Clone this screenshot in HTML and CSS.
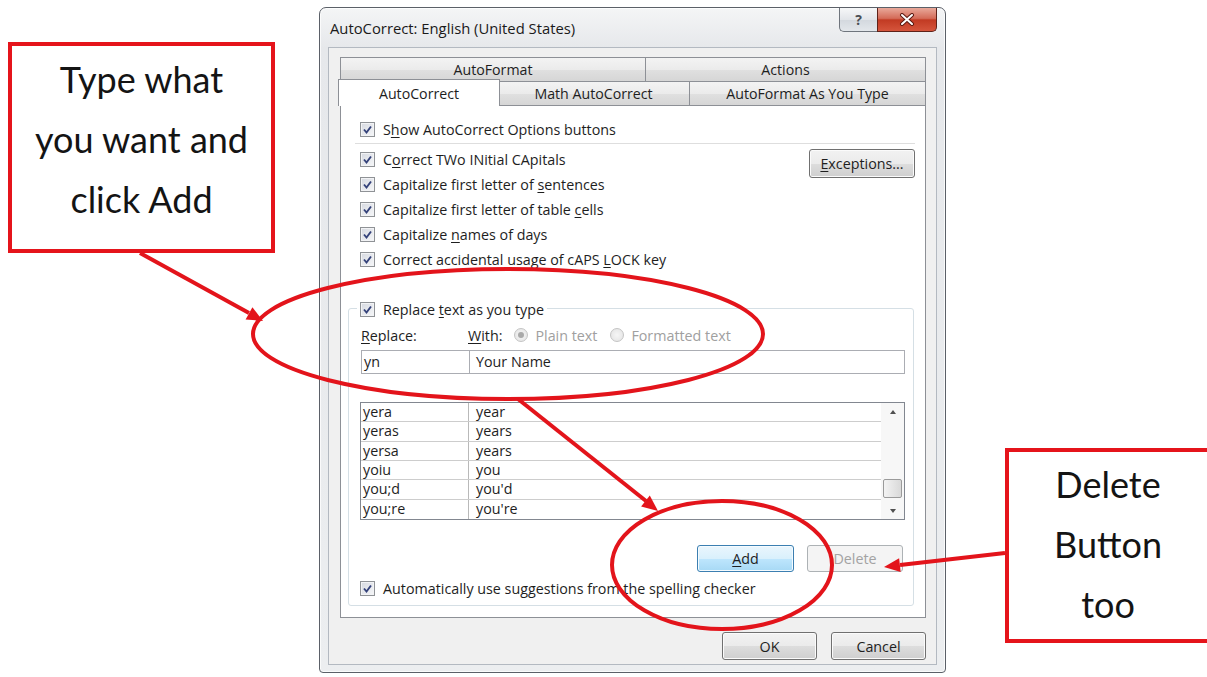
FILE: index.html
```html
<!DOCTYPE html>
<html lang="en">
<head>
<meta charset="utf-8">
<title>AutoCorrect: English (United States)</title>
<link rel="stylesheet" href="styles.css">
</head>
<body>
<div class="stage">

  <div class="note note-left">
    <span>Type what</span>
    <span>you want and</span>
    <span>click Add</span>
  </div>

  <div class="window">
    <div class="titlebar">
      <span class="title">AutoCorrect: English (United States)</span>
      <div class="caption">
        <span class="cap-btn cap-help">?</span>
        <span class="cap-btn cap-close">
          <svg width="16" height="13" viewBox="0 0 16 13">
            <path d="M3 2 L13 11 M13 2 L3 11" stroke="#5a1a12" stroke-width="4" stroke-linecap="round"/>
            <path d="M3 2 L13 11 M13 2 L3 11" stroke="#fff" stroke-width="2" stroke-linecap="round"/>
          </svg>
        </span>
      </div>
    </div>

    <div class="client">
      <div class="tabrow">
        <div class="tab tab-autoformat">AutoFormat</div>
        <div class="tab tab-actions">Actions</div>
      </div>
      <div class="tabrow">
        <div class="tab tab-autocorrect active">AutoCorrect</div>
        <div class="tab tab-math">Math AutoCorrect</div>
        <div class="tab tab-asyoutype">AutoFormat As You Type</div>
      </div>

      <div class="panel">
        <div class="check top-opt">
          <span class="cb"><svg viewBox="0 0 11 11"><path d="M2 5.5 L4.5 8.5 L9 2.5"/></svg></span>
          <span>S<u>h</u>ow AutoCorrect Options buttons</span>
        </div>
        <div class="sep"></div>

        <div class="opts">
          <div class="opt-list">
            <div class="check">
              <span class="cb"><svg viewBox="0 0 11 11"><path d="M2 5.5 L4.5 8.5 L9 2.5"/></svg></span>
              <span>C<u>o</u>rrect TWo INitial CApitals</span>
            </div>
            <div class="check">
              <span class="cb"><svg viewBox="0 0 11 11"><path d="M2 5.5 L4.5 8.5 L9 2.5"/></svg></span>
              <span>Capitalize first letter of <u>s</u>entences</span>
            </div>
            <div class="check">
              <span class="cb"><svg viewBox="0 0 11 11"><path d="M2 5.5 L4.5 8.5 L9 2.5"/></svg></span>
              <span>Capitalize first letter of table <u>c</u>ells</span>
            </div>
            <div class="check">
              <span class="cb"><svg viewBox="0 0 11 11"><path d="M2 5.5 L4.5 8.5 L9 2.5"/></svg></span>
              <span>Capitalize <u>n</u>ames of days</span>
            </div>
            <div class="check">
              <span class="cb"><svg viewBox="0 0 11 11"><path d="M2 5.5 L4.5 8.5 L9 2.5"/></svg></span>
              <span>Correct accidental usage of cAPS <u>L</u>OCK key</span>
            </div>
          </div>
          <button class="btn btn-exc"><u>E</u>xceptions...</button>
        </div>

        <div class="group">
          <div class="check legend">
            <span class="cb"><svg viewBox="0 0 11 11"><path d="M2 5.5 L4.5 8.5 L9 2.5"/></svg></span>
            <span>Replace <u>t</u>ext as you type</span>
          </div>

          <div class="labels">
            <span class="lbl-replace"><u>R</u>eplace:</span>
            <span class="lbl-with"><u>W</u>ith:</span>
            <span class="radio radio-plain"><span class="rb on"></span>Plain text</span>
            <span class="radio"><span class="rb"></span>Formatted text</span>
          </div>

          <div class="entry">
            <div class="field field-from">yn</div>
            <div class="field field-to">Your Name</div>
          </div>

          <div class="list">
            <div class="list-rows">
              <div class="list-row"><span class="c1">yera</span><span class="c2">year</span></div>
              <div class="list-row"><span class="c1">yeras</span><span class="c2">years</span></div>
              <div class="list-row"><span class="c1">yersa</span><span class="c2">years</span></div>
              <div class="list-row"><span class="c1">yoiu</span><span class="c2">you</span></div>
              <div class="list-row"><span class="c1">you;d</span><span class="c2">you'd</span></div>
              <div class="list-row"><span class="c1">you;re</span><span class="c2">you're</span></div>
            </div>
            <div class="vscroll">
              <span class="sb-btn"><span class="arr-up"></span></span>
              <span class="sb-track"></span>
              <span class="thumb"></span>
              <span class="sb-btn"><span class="arr-down"></span></span>
            </div>
          </div>

          <div class="actions">
            <button class="btn btn-default btn-add"><u>A</u>dd</button>
            <button class="btn btn-disabled btn-del">Delete</button>
          </div>

          <div class="check auto-opt">
            <span class="cb"><svg viewBox="0 0 11 11"><path d="M2 5.5 L4.5 8.5 L9 2.5"/></svg></span>
            <span>Automatically use su<u>g</u>gestions from the spelling checker</span>
          </div>
        </div>
      </div>

      <div class="footer">
        <button class="btn btn-foot">OK</button>
        <button class="btn btn-foot">Cancel</button>
      </div>
    </div>
  </div>

  <div class="note note-right">
    <span>Delete</span>
    <span>Button</span>
    <span>too</span>
  </div>

  <svg class="marks" width="1207" height="677" viewBox="0 0 1207 677">
    <g fill="none" stroke="#e3141b" stroke-width="4">
      <ellipse cx="508" cy="334" rx="255" ry="65"/>
      <ellipse cx="722" cy="565" rx="110" ry="64"/>
      <line x1="140" y1="253" x2="249" y2="313"/>
      <line x1="518" y1="399" x2="646" y2="501"/>
      <line x1="1005" y1="553" x2="900" y2="565"/>
    </g>
    <g fill="#e3141b">
      <polygon points="263,321 245.6,319.4 252.4,307.2"/>
      <polygon points="658,511 641.1,506.5 649.8,495.5"/>
      <polygon points="884,567 899.1,558.2 900.7,572.1"/>
    </g>
  </svg>
</div>
</body>
</html>
```

FILE: styles.css
```css
* { box-sizing: border-box; }

html, body { margin: 0; padding: 0; }

body {
  background: #fff;
  font-family: "Open Sans", "Noto Sans", sans-serif;
  color: #1e1e1e;
}

.stage {
  position: relative;
  width: 1207px;
  height: 677px;
  overflow: hidden;
}

u { text-decoration: underline; text-underline-offset: 2px; }

/* ---------- callout boxes ---------- */
.note {
  position: absolute;
  display: flex;
  flex-direction: column;
  align-items: center;
  border: 4px solid #e5141b;
  background: #fff;
  font-family: Lato, "Open Sans", sans-serif;
  font-size: 36px;
  line-height: 60px;
  color: #141414;
  white-space: nowrap;
}
.note-left  { left: 8px;    top: 42px;  width: 267px; height: 211px; padding-top: 3px; }
.note-right { left: 1005px; top: 448px; width: 206px; height: 195px; padding-top: 2px; }

.marks {
  position: absolute;
  left: 0;
  top: 0;
  z-index: 5;
  pointer-events: none;
}

/* ---------- dialog window ---------- */
.window {
  position: absolute;
  left: 319px;
  top: 7px;
  width: 627px;
  height: 666px;
  display: flex;
  flex-direction: column;
  padding: 0 8px 7px;
  border: 1px solid #5b6068;
  border-radius: 7px 7px 4px 4px;
  background: linear-gradient(180deg, #f4f5f6 0, #e6e8eb 40px, #eceef0 100%);
  box-shadow: inset 0 0 0 1px rgba(255, 255, 255, 0.75);
}

.titlebar {
  flex: none;
  height: 39px;
  display: flex;
  justify-content: space-between;
}
.title {
  margin: 10px 0 0 2px;
  font-size: 14.8px;
  line-height: 20px;
  color: #1a1a1a;
}
.caption { display: flex; height: 24px; }
.cap-btn {
  display: flex;
  align-items: center;
  justify-content: center;
  height: 24px;
}
.cap-help {
  width: 38px;
  border: 1px solid #6f757d;
  border-top: 0;
  border-right: 0;
  border-radius: 0 0 0 5px;
  background: linear-gradient(#f6f7f8, #e2e5e9 50%, #d3d8de 51%, #e3e7eb);
  font-size: 14px;
  font-weight: bold;
  color: #4a4f55;
}
.cap-close {
  width: 60px;
  border: 1px solid #5e2219;
  border-top: 0;
  border-radius: 0 0 5px 0;
  background: linear-gradient(#e9a99b, #d46b58 45%, #c23a23 52%, #d5553c);
}

.client {
  flex: 1;
  display: flex;
  flex-direction: column;
  padding: 9px 10px 0 11px;
  border: 1px solid #b3b9c1;
  background: #f0f0f0;
}

/* ---------- tabs ---------- */
.tabrow { flex: none; display: flex; height: 24px; }
.tab {
  height: 24px;
  display: flex;
  align-items: center;
  justify-content: center;
  border: 1px solid #8d9096;
  border-bottom: 0;
  background: linear-gradient(#f3f3f3, #ebebeb 50%, #e0e0e0 51%, #d6d6d6);
  font-size: 14.2px;
  color: #1e1e1e;
}
.tab + .tab { margin-left: -1px; }
.tab-autoformat { width: 306px; }
.tab-actions    { width: 281px; }
.tab-autocorrect { width: 162px; }
.tab-math       { width: 193px; }
.tab-asyoutype  { width: 237px; }
.tab.active {
  position: relative;
  z-index: 2;
  height: 27px;
  margin: -2px -2px 0 -2px;
  background: #fff;
}

/* ---------- tab page ---------- */
.panel {
  position: relative;
  z-index: 1;
  flex: none;
  height: 513px;
  display: flex;
  flex-direction: column;
  border: 1px solid #8d9096;
  background: #fff;
}

.check {
  display: flex;
  align-items: center;
  gap: 8px;
  height: 25px;
  font-size: 14.3px;
  white-space: nowrap;
}
.cb {
  flex: none;
  width: 15px;
  height: 15px;
  display: flex;
  align-items: center;
  justify-content: center;
  border: 1px solid #8f9296;
  background: linear-gradient(135deg, #d6d9e0, #f6f7f9);
  box-shadow: inset 0 0 0 1px #f2f3f5;
}
.cb svg { width: 11px; height: 11px; }
.cb path { fill: none; stroke: #34427a; stroke-width: 1.9; }

.top-opt { margin: 11px 0 0 19px; }
.sep { height: 1px; margin: 1px 10px 0 14px; background: #dedede; }

.opts {
  display: flex;
  justify-content: space-between;
  align-items: flex-start;
  margin: 3px 10px 0 19px;
}
.opt-list { display: flex; flex-direction: column; }

/* ---------- buttons ---------- */
.btn {
  height: 28px;
  padding: 0;
  border: 1px solid #707070;
  border-radius: 3px;
  background: linear-gradient(#f2f2f2, #ebebeb 50%, #dddddd 51%, #cfcfcf);
  box-shadow: inset 0 0 0 1px #fbfbfb;
  font-family: inherit;
  font-size: 14.3px;
  color: #1e1e1e;
}
.btn-exc { width: 106px; height: 29px; margin-top: 2px; }
.btn-default {
  border-color: #3c7fb1;
  background: linear-gradient(#eaf6fd, #d9f0fc 50%, #bee6fd 51%, #a7d9f5);
  box-shadow: inset 0 0 0 1px #f4fbff;
}
.btn-disabled {
  border-color: #adb2b5;
  background: #f4f4f4;
  box-shadow: none;
  color: #a3a3a3;
}

/* ---------- replace group ---------- */
.group {
  display: flex;
  flex-direction: column;
  margin: 36px 11px 0 7px;
  padding: 0 8px 6px 11px;
  border: 1px solid #d5dfe5;
  border-radius: 3px;
}
.legend {
  align-self: flex-start;
  height: 22px;
  margin: -11px 0 0 -3px;
  padding: 0 3px;
  background: #fff;
}

.labels {
  display: flex;
  align-items: center;
  height: 20px;
  margin: 5px 0 0 1px;
  font-size: 14.3px;
  white-space: nowrap;
}
.lbl-replace { width: 107px; }
.lbl-with { margin-right: 12px; }
.radio { display: flex; align-items: center; gap: 7px; color: #a0a0a0; }
.radio-plain { margin-right: 13px; }
.rb {
  position: relative;
  width: 14px;
  height: 14px;
  border: 1px solid #c4c4c4;
  border-radius: 50%;
  background: radial-gradient(circle, #f6f6f6, #e2e2e2);
}
.rb.on::after {
  content: "";
  position: absolute;
  left: 3px;
  top: 3px;
  width: 6px;
  height: 6px;
  border-radius: 50%;
  background: #a9a9a9;
}

.entry { display: flex; height: 24px; margin: 5px 0 0 1px; }
.field {
  height: 24px;
  border: 1px solid #abadb3;
  font-size: 14.3px;
  line-height: 22px;
  padding-left: 2px;
}
.field-from { width: 109px; }
.field-to { flex: 1; margin-left: -1px; padding-left: 6px; }

.list {
  display: flex;
  height: 118px;
  margin-top: 28px;
  border: 1px solid #828790;
}
.list-rows { flex: 1; display: flex; flex-direction: column; }
.list-row {
  display: flex;
  height: 19.33px;
  border-bottom: 1px solid #cdcdcd;
  font-size: 14.3px;
  line-height: 18px;
}
.list-row:last-child { border-bottom: 0; }
.c1 { width: 108px; padding-left: 2px; border-right: 1px solid #b9b9b9; }
.c2 { padding-left: 7px; }

.vscroll {
  flex: none;
  width: 23px;
  display: flex;
  flex-direction: column;
  align-items: center;
  background: #f7f7f7;
}
.sb-btn {
  width: 100%;
  height: 17px;
  display: flex;
  align-items: center;
  justify-content: center;
}
.sb-track { flex: 1; }
.arr-up, .arr-down {
  width: 0;
  height: 0;
  border-left: 3.5px solid transparent;
  border-right: 3.5px solid transparent;
}
.arr-up { border-bottom: 4px solid #505050; }
.arr-down { border-top: 4px solid #505050; }
.thumb {
  width: 19px;
  height: 19px;
  margin-bottom: 4px;
  border: 1px solid #9a9a9a;
  border-radius: 2px;
  background: linear-gradient(90deg, #f3f3f3, #d9d9d9);
}

.actions {
  display: flex;
  justify-content: flex-end;
  gap: 13px;
  height: 27px;
  margin-top: 25px;
  padding-right: 2px;
}
.btn-add { width: 97px; height: 27px; }
.btn-del { width: 96px; height: 27px; }

.auto-opt { height: 22px; margin-top: 5px; }

/* ---------- OK / Cancel ---------- */
.footer {
  flex: none;
  display: flex;
  justify-content: flex-end;
  gap: 14px;
  margin-top: 14px;
}
.btn-foot { width: 95px; height: 28px; }
```
